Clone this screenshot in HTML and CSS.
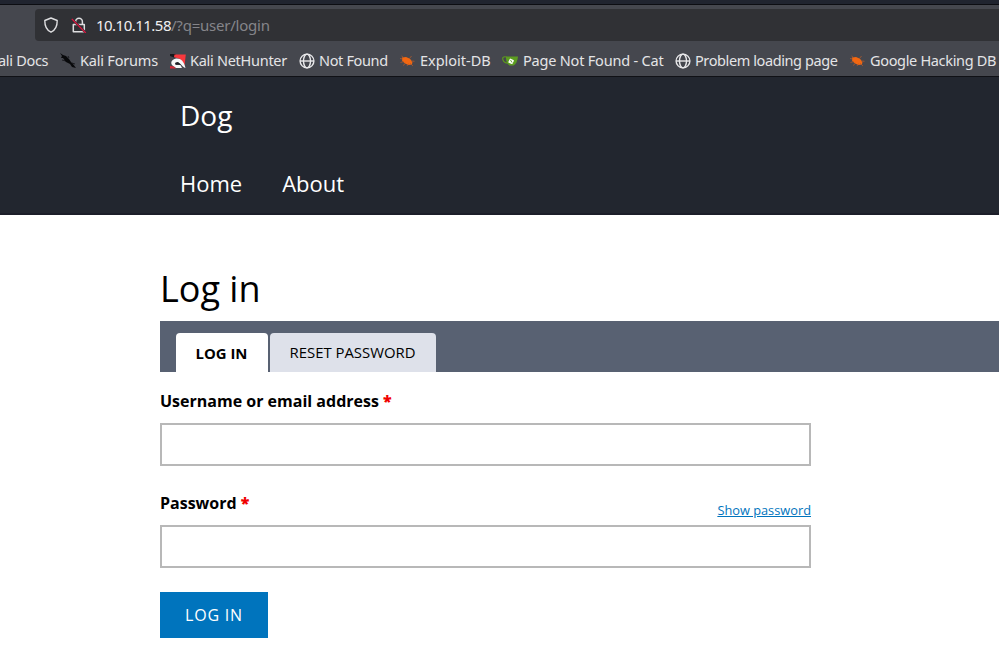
FILE: index.html
```html
<!DOCTYPE html>
<html lang="en">
<head>
<meta charset="utf-8">
<title>Log in | Dog</title>
<link rel="stylesheet" href="styles.css">
</head>
<body>
<svg class="defs" aria-hidden="true">
  <symbol id="globe" viewBox="0 0 16 16"><g fill="none" stroke="#e8e8ea" stroke-width="1.4"><circle cx="8" cy="8" r="6.9"/><ellipse cx="8" cy="8" rx="3.5" ry="6.9"/><path d="M1.1 8H14.9"/></g></symbol>
  <symbol id="bug" viewBox="0 0 16 16"><path d="M3 4.6L7 4L11 5.8L13.4 9L13 11.6L9.5 12L6 10.6L3.2 8Z" fill="#f26711"/><path d="M1 5.5L4 6M1.5 9.5L5 8.5M4 12.5L7 10M8 13L9.5 10.5M11 10L14 13M12 8L15.5 8.3M10.5 5.5L12.5 3M2.5 3L4.5 4.5" fill="none" stroke="#b95a28" stroke-width=".7"/></symbol>
</svg>
<div class="tabstrip"></div>
<div class="toolbar">
  <div class="urlbar">
    <svg class="icon" viewBox="0 0 16 16"><path d="M8 1L14.2 3.5C14.3 8.5 12.3 13.2 8 15.2C3.7 13.2 1.7 8.5 1.8 3.5Z" fill="none" stroke="#dedee0" stroke-width="1.4" stroke-linejoin="round"/></svg>
    <svg class="icon" viewBox="0 0 16 16"><path d="M4.6 7V4.7A3.4 3.4 0 0 1 11.4 4.7V7M2.3 7.5H13.3V14.7H2.3Z" fill="none" stroke="#dedee0" stroke-width="1.5" stroke-linejoin="round"/><path d="M.8 1.9L14.8 15.9" stroke="#303135" stroke-width="2.2"/><path d="M.8 1.9L14.8 15.9" stroke="#e2143f" stroke-width="1.3"/></svg>
    <div class="url">10.10.11.58<span>/?q=user/login</span></div>
  </div>
</div>
<nav class="bookmarks">
  <a class="docs">ali Docs</a>
  <a class="forums"><svg class="icon" viewBox="0 0 16 16"><path d="M0 0L3 2L6 3L9 6L11 9L13 11L16 15L12 14L10 11L6 9L3 5L1 5L2 3Z" fill="#08090b"/><path d="M2 7L6 8M8 3L9 5M12 10L15 11" stroke="#08090b" stroke-width=".7"/></svg>Kali Forums</a>
  <a class="hunter"><svg class="icon" viewBox="0 0 16 16"><path d="M0 1H6L4 4.5L0 3Z" fill="#17171b"/><path d="M4.5 1.5H15.8L14.6 12L10 6L4 4Z" fill="#f8383d"/><path d="M4.5 14C-.5 11.5 .5 6.5 6 5.5C10.5 5 14 8 15.5 15C12 14 11 10 7.5 9.2C4.5 9 4 12 7 12L10.5 12L12 15H6Z" fill="#f7f7f7"/><path d="M5 10L8 9L11.5 12.6L9 11.6L6.5 11.5Z" fill="#202025"/><path d="M0 13L4 13.5L6 15.5H0Z" fill="#d72938"/></svg>Kali NetHunter</a>
  <a class="missing"><svg class="icon"><use href="#globe"/></svg>Not Found</a>
  <a class="exploit"><svg class="icon"><use href="#bug"/></svg>Exploit-DB</a>
  <a class="cat"><svg class="icon" viewBox="0 0 16 16"><path d="M4.5 4C1 3 .2 5 1 7C1.8 9.5 3.5 10 6 10" fill="none" stroke="#5c961f" stroke-width="1.2"/><path d="M4 3.4L16 3.5C15.5 8 14 11 11.5 12.6H7.5C5 11.5 3.8 8 4 3.4Z" fill="#5c9c20"/><rect x="7" y="6" width="4.5" height="4.5" rx=".7" fill="#fff" transform="rotate(25 9 8)"/><path d="M8.5 7L10 9.5" stroke="#5c9c20" stroke-width=".9"/></svg>Page Not Found - Cat</a>
  <a class="problem"><svg class="icon"><use href="#globe"/></svg>Problem loading page</a>
  <a class="google"><svg class="icon"><use href="#bug"/></svg>Google Hacking DB</a>
</nav>
<header class="site-header">
  <div class="site-name">Dog</div>
  <nav class="menu"><a>Home</a><a>About</a></nav>
</header>
<main class="content">
  <h1>Log in</h1>
  <div class="tabs"><a class="tab active">LOG IN</a><a class="tab">RESET PASSWORD</a></div>
  <form>
    <div class="field">
      <label for="name">Username or email address <b>*</b></label>
      <input id="name" type="text">
    </div>
    <div class="field">
      <div class="label-row"><label for="pass">Password <b>*</b></label><a class="show">Show password</a></div>
      <input id="pass" type="password">
    </div>
    <button type="button">LOG IN</button>
  </form>
</main>
</body>
</html>
```
FILE: styles.css
```css
* { box-sizing: border-box; }
body { margin: 0; width: 999px; height: 652px; overflow: hidden; background: #fff; color: #000; font: 16px/24px "Open Sans", "Noto Sans", sans-serif; }
.defs { display: none; }
.tabstrip { height: 5px; background: #20242f; border-bottom: 1px solid #0c0d12; }
.toolbar { height: 40px; padding: 4px 0 4px 35px; background: #45474e; font-family: "Noto Sans", sans-serif; }
.urlbar { display: flex; align-items: center; height: 32px; padding-left: 8px; background: #303135; border-radius: 4px 0 0 4px; }
.icon { width: 16px; height: 16px; flex: none; }
.urlbar .icon { margin-right: 12px; }
.bookmarks .icon { margin-top: 2px; }
.url { margin-left: -3px; color: #f0f0f2; font-size: 15px; letter-spacing: -.52px; white-space: pre; }
.url span { color: #85858a; letter-spacing: -.22px; }
.bookmarks { display: flex; align-items: center; height: 32px; padding-bottom: 1px; background: #45474e; border-bottom: 1px solid #101116; color: #e4e4e6; font: 14.5px/20px "Noto Sans", sans-serif; white-space: nowrap; }
.bookmarks a { display: flex; align-items: center; gap: 4px; flex: none; margin-right: 12px; }
.docs { width: 50px; margin-left: -2px; letter-spacing: -.3px; }
.forums { width: 98px; letter-spacing: -.2px; }
.hunter { width: 117px; letter-spacing: -.28px; }
.missing { width: 88px; letter-spacing: -.35px; }
.exploit { width: 91px; letter-spacing: -.02px; }
.exploit .icon, .google .icon { margin-right: 1px; }
.cat { width: 161px; letter-spacing: -.2px; }
.problem { width: 162px; letter-spacing: -.4px; }
.google { width: 147px; letter-spacing: -.33px; }
.bookmarks .cat { gap: 5px; }
.site-header { height: 138px; padding: 17px 180px 0; background: #22262f; border-bottom: 2px solid #1c1e29; color: #fff; }
.site-name { height: 42px; font-size: 28px; line-height: 42px; }
.menu { display: flex; gap: 40px; padding-top: 31px; font-size: 22px; line-height: 32px; }
.content { padding-left: 160px; }
h1 { margin: 0; padding-top: 48px; height: 106px; font-size: 36px; font-weight: 400; line-height: 52px; }
.tabs { display: flex; align-items: flex-end; gap: 2px; height: 51px; padding-left: 16px; background: #586172; }
.tab { height: 39px; padding: 0 20px 0 19.5px; background: #dee1ea; border-radius: 4px 4px 0 0; font-size: 14.9px; line-height: 39px; white-space: nowrap; }
.tab.active { width: 92px; background: #fff; font-weight: 700; line-height: 41px; }
form { width: 651px; padding-top: 17px; }
.field { height: 102px; }
label { display: block; height: 34px; font-weight: 700; }
label b { color: #f00000; }
.label-row { display: flex; justify-content: space-between; }
.show { padding-top: 9px; font-size: 12.8px; line-height: 20px; color: #0074bd; text-decoration: underline; }
input { display: block; width: 651px; height: 43px; border: 2px solid #b8b8b8; border-radius: 0; background: #fff; padding: 0 8px; }
button { display: block; width: 108px; height: 46px; margin: -1px 0 0; padding: 0; border: 0; background: #0074bd; color: #fff; font: 16px "Open Sans", sans-serif; letter-spacing: .8px; }
```
